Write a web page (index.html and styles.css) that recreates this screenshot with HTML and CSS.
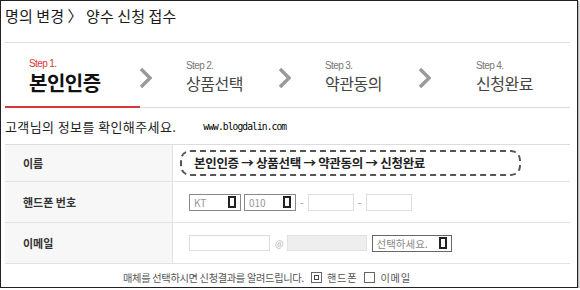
FILE: index.html
```html
<!DOCTYPE html>
<html>
<head>
    <title>명의 변경 - 양수 신청 접수</title>
    <link rel="stylesheet" href="styles.css">
</head>
<body>
<div class="frame">
    <h1 class="title">명의 변경 〉 양수 신청 접수</h1>

    <div class="steps">
        <div class="step step-1 active">
            <span class="step-no">Step 1.</span>
            <span class="step-name">본인인증</span>
        </div>
        <svg class="chev" width="13" height="22" viewBox="0 0 13 22"><polyline points="2,2 11,11 2,20" fill="none" stroke="#9a9a9a" stroke-width="3.4"/></svg>
        <div class="step step-2">
            <span class="step-no">Step 2.</span>
            <span class="step-name">상품선택</span>
        </div>
        <svg class="chev" width="13" height="22" viewBox="0 0 13 22"><polyline points="2,2 11,11 2,20" fill="none" stroke="#9a9a9a" stroke-width="3.4"/></svg>
        <div class="step step-3">
            <span class="step-no">Step 3.</span>
            <span class="step-name">약관동의</span>
        </div>
        <svg class="chev chev-last" width="13" height="22" viewBox="0 0 13 22"><polyline points="2,2 11,11 2,20" fill="none" stroke="#9a9a9a" stroke-width="3.4"/></svg>
        <div class="step step-4">
            <span class="step-no">Step 4.</span>
            <span class="step-name">신청완료</span>
        </div>
    </div>

    <div class="intro">
        <span class="intro-text">고객님의 정보를 확인해주세요.</span>
        <span class="mark">www.blogdalin.com</span>
    </div>

    <div class="form">
        <div class="row row-name">
            <div class="label">이름</div>
            <div class="field">
                <div class="flow">본인인증 → 상품선택 → 약관동의 → 신청완료</div>
            </div>
        </div>
        <div class="row">
            <div class="label">핸드폰 번호</div>
            <div class="field">
                <div class="select s-tel">KT<i class="arrow"></i></div>
                <div class="select s-tel">010<i class="arrow"></i></div>
                <span class="dash">-</span>
                <div class="input i-tel"></div>
                <span class="dash">-</span>
                <div class="input i-tel"></div>
            </div>
        </div>
        <div class="row">
            <div class="label">이메일</div>
            <div class="field">
                <div class="input i-mail"></div>
                <span class="at">@</span>
                <div class="input i-domain"></div>
                <div class="select s-domain">선택하세요.<i class="arrow"></i></div>
            </div>
        </div>
    </div>

    <div class="notice">
        <span class="notice-text">매체를 선택하시면 신청결과를 알려드립니다.</span>
        <span class="check checked"></span><span>핸드폰</span>
        <span class="check"></span><span>이메일</span>
    </div>
</div>
</body>
</html>
```

FILE: styles.css
```css
body { margin: 0; font-family: "Noto Sans CJK KR", "Liberation Sans", sans-serif; color: #222; background: #fff; }
.frame { box-sizing: border-box; width: 578px; height: 288px; border: 1px solid #222; box-shadow: 1px 1px 0 #bbb, 2px 2px 0 #ddd; padding: 0 7px 0 4px; overflow: hidden; }

.title { margin: 0; height: 41px; border-bottom: 1px solid #ddd; font-size: 15px; font-weight: normal; line-height: 29px; letter-spacing: 0.1px; color: #1a1a1a; }

.steps { display: flex; align-items: center; height: 64px; border-bottom: 1px solid #ddd; }
.step { display: flex; flex-direction: column; align-self: stretch; justify-content: center; padding-top: 4px; box-sizing: border-box; }
.step-no { font-family: "Liberation Sans", Arial, sans-serif; font-size: 10px; letter-spacing: -0.6px; color: #777; line-height: 12px; }
.step-name { font-size: 16px; color: #444; line-height: 22px; letter-spacing: -0.5px; }
.step-1 { width: 135px; padding-left: 24px; }
.step-1.active { border-bottom: 2px solid #d8383a; margin-bottom: -1px; }
.active .step-no { color: #d8383a; }
.active .step-name { font-size: 20px; font-weight: bold; color: #111; line-height: 26px; }
.step-2 { width: 93px; }
.step-3 { width: 94px; }
.chev { margin: 6px 34px 0 -1px; flex: none; }
.chev-last { margin-right: 45px; }

.intro { display: flex; align-items: center; height: 35px; padding-top: 1px; }
.intro-text { font-size: 13px; letter-spacing: 0.4px; color: #222; }
.mark { margin-left: 27px; font-family: "DejaVu Sans Mono", monospace; font-size: 9.6px; letter-spacing: -0.9px; color: #000; }

.form { border-top: 1px solid #ddd; }
.row { display: flex; height: 40px; border-bottom: 1px solid #e2e2e2; }
.row-name { height: 36px; }
.label { width: 168px; box-sizing: border-box; padding-left: 18px; background: #f7f7f7; border-right: 1px solid #e2e2e2; font-size: 11px; font-weight: bold; color: #333; display: flex; align-items: center; }
.field { flex: 1; display: flex; align-items: center; padding-left: 16px; gap: 3px; font-size: 11px; color: #777; }
.row-name .field { padding-left: 7px; }

.flow { box-sizing: border-box; width: 341px; height: 26px; border: 2px dashed #555; border-radius: 10px; padding-left: 12px; font-size: 12.5px; font-weight: bold; color: #222; line-height: 22px; letter-spacing: -0.3px; }

.select { box-sizing: border-box; height: 17px; border: 1px solid #888; display: flex; align-items: center; justify-content: space-between; padding: 0 4px 0 4px; font-size: 10px; color: #999; }
.s-tel { width: 52px; }
.s-domain { width: 80px; margin-left: 2px; color: #888; font-size: 10.5px; border-color: #666; }
.arrow { width: 4px; height: 8px; border: 2px solid #222; box-sizing: content-box; }
.input { box-sizing: border-box; height: 17px; border: 1px solid #ddd; background: #fff; }
.i-tel { width: 46px; }
.i-mail { width: 81px; height: 16px; }
.i-domain { width: 80px; height: 16px; background: #eee; border-color: #e2e2e2; }
.dash { color: #999; padding: 0 1px; }
.at { color: #aaa; padding: 0 0 0 2px; font-size: 9px; }

.notice { display: flex; align-items: center; justify-content: center; height: 26px; padding-right: 34px; font-size: 10.2px; color: #555; letter-spacing: -0.3px; }
.notice-text { margin-right: 7px; }
.check { display: inline-block; box-sizing: border-box; width: 11px; height: 11px; border: 1px solid #666; position: relative; margin-right: 5px; }
.check + span { margin-right: 7px; letter-spacing: 0.8px; }
.check.checked::after { content: ""; position: absolute; left: 2px; top: 2px; width: 3px; height: 3px; border: 1px solid #444; }
```
